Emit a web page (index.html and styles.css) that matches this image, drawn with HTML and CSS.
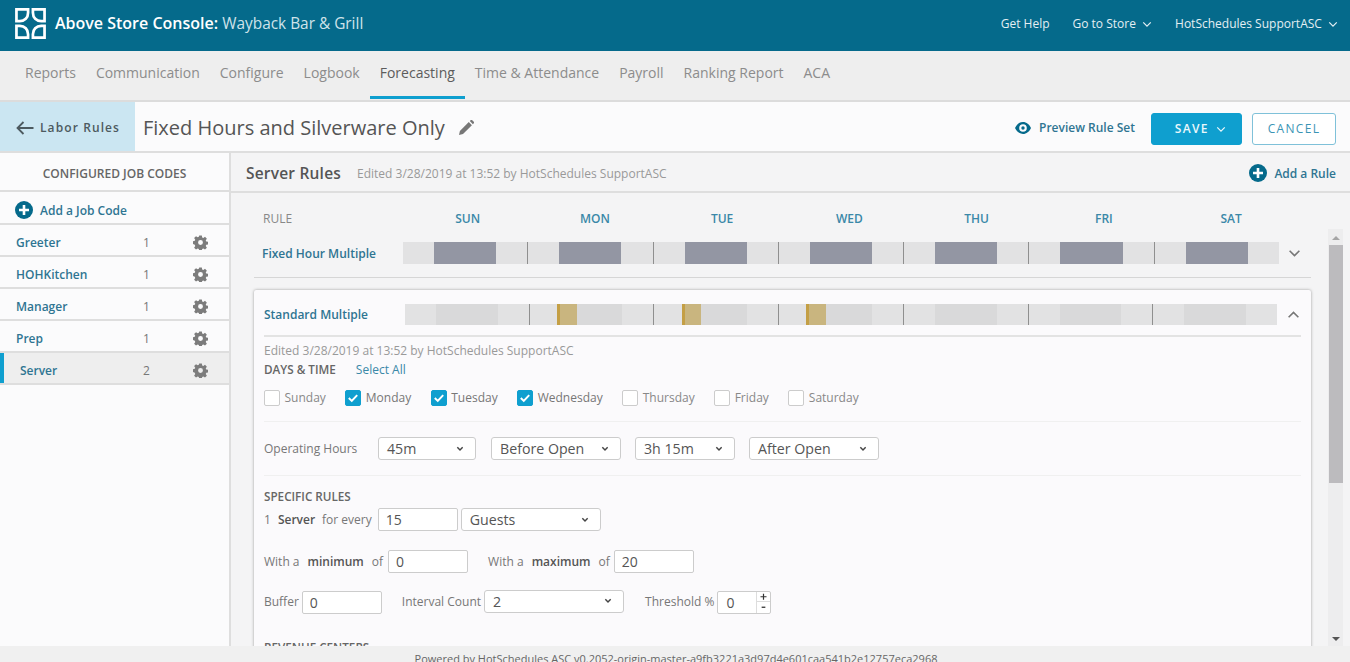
FILE: index.html
```html
<!DOCTYPE html>
<html lang="en">
<head>
    <meta charset="UTF-8">
    <meta name="viewport" content="width=device-width, initial-scale=1.0">
    <title>Above Store Console</title>
    <link rel="stylesheet" href="styles.css">
</head>
<body>

    <svg class="icon-defs" width="0" height="0">
        <defs>
            <symbol id="chev" viewBox="0 0 12 8"><path d="M1.5 1.5 6 6l4.5-4.5" fill="none" stroke="currentColor" stroke-width="1.5"/></symbol>
            <symbol id="chev-bold" viewBox="0 0 12 8"><path d="M2 1.5 6 5.5l4-4" fill="none" stroke="currentColor" stroke-width="2.2"/></symbol>
            <symbol id="plus" viewBox="0 0 18 18"><circle cx="9" cy="9" r="9" fill="currentColor"/><path d="M9 4v10M4 9h10" stroke="#fff" stroke-width="2.6"/></symbol>
            <symbol id="gear" viewBox="0 0 16 16"><path fill="currentColor" fill-rule="evenodd" d="M6.6.5h2.8l.4 2.1 1.2.5 1.8-1.2 2 2-1.2 1.8.5 1.2 2.1.4v2.8l-2.1.4-.5 1.2 1.2 1.8-2 2-1.8-1.2-1.2.5-.4 2.1H6.6l-.4-2.1-1.2-.5-1.8 1.2-2-2 1.2-1.8-.5-1.2L-.2 9.4V6.6l2.1-.4.5-1.2-1.2-1.8 2-2L5 2.4l1.2-.5zM8 5.4a2.6 2.6 0 1 0 0 5.2 2.6 2.6 0 0 0 0-5.2z"/></symbol>
            <symbol id="tick" viewBox="0 0 16 16"><path d="M3.2 8 6.6 11.4 12.8 4.6" fill="none" stroke="#fff" stroke-width="2.2"/></symbol>
            <path id="petal" d="M1.5 1.5H13.5V5C13.5 10 10 13.5 5 13.5H1.5Z"/>
        </defs>
    </svg>

    <!-- Top bar -->
    <header class="topbar">
        <svg class="logo" viewBox="0 0 32 32" width="31" height="31">
            <g fill="none" stroke="#fff" stroke-width="2.8">
                <use href="#petal"/>
                <use href="#petal" transform="matrix(-1 0 0 1 32 0)"/>
                <use href="#petal" transform="matrix(1 0 0 -1 0 32)"/>
                <use href="#petal" transform="matrix(-1 0 0 -1 32 32)"/>
            </g>
        </svg>
        <div class="brand"><b>Above Store Console:</b> <span>Wayback Bar &amp; Grill</span></div>
        <div class="top-links">
            <a href="#">Get Help</a>
            <a href="#">Go to Store <svg class="chev-sm"><use href="#chev"/></svg></a>
            <a href="#">HotSchedules SupportASC <svg class="chev-sm"><use href="#chev"/></svg></a>
        </div>
    </header>

    <!-- Main navigation -->
    <nav class="mainnav">
        <a href="#">Reports</a>
        <a href="#">Communication</a>
        <a href="#">Configure</a>
        <a href="#">Logbook</a>
        <a href="#" class="active">Forecasting</a>
        <a href="#">Time &amp; Attendance</a>
        <a href="#">Payroll</a>
        <a href="#">Ranking Report</a>
        <a href="#">ACA</a>
    </nav>

    <!-- Rule set title -->
    <div class="toolbar">
        <a href="#" class="back">
            <svg width="18" height="14" viewBox="0 0 18 14"><path d="M7.5 1 1.5 7l6 6M1.5 7H17.5" fill="none" stroke="currentColor" stroke-width="1.8"/></svg>
            Labor Rules
        </a>
        <h1 class="set-title">Fixed Hours and Silverware Only</h1>
        <svg class="pencil" width="15" height="15" viewBox="0 0 15 15"><path fill="currentColor" d="M0 15l.9-4L9.8 2.1l3.1 3.1L4 14.1zM10.8 1.1 11.9 0a.8.8 0 0 1 1.1 0l2 2a.8.8 0 0 1 0 1.1l-1.1 1.1z"/></svg>
        <a href="#" class="preview">
            <svg width="16" height="12" viewBox="0 0 16 12"><path fill="currentColor" fill-rule="evenodd" d="M8 0c3.5 0 6.4 2.4 8 6-1.6 3.6-4.5 6-8 6S1.6 9.6 0 6c1.6-3.6 4.5-6 8-6zm0 2.2a3.8 3.8 0 1 0 0 7.6 3.8 3.8 0 0 0 0-7.6zM8 4.3a1.7 1.7 0 1 1 0 3.4 1.7 1.7 0 0 1 0-3.4z"/></svg>
            Preview Rule Set
        </a>
        <button class="btn-save">SAVE <svg class="chev-sm"><use href="#chev"/></svg></button>
        <button class="btn-cancel">CANCEL</button>
    </div>

    <div class="workspace">

        <!-- Job codes -->
        <aside class="sidebar">
            <div class="side-title">CONFIGURED JOB CODES</div>
            <a href="#" class="add-job"><svg class="plus"><use href="#plus"/></svg> Add a Job Code</a>
            <div class="job"><span class="job-name">Greeter</span><span class="job-count">1</span><svg class="gear"><use href="#gear"/></svg></div>
            <div class="job"><span class="job-name">HOHKitchen</span><span class="job-count">1</span><svg class="gear"><use href="#gear"/></svg></div>
            <div class="job"><span class="job-name">Manager</span><span class="job-count">1</span><svg class="gear"><use href="#gear"/></svg></div>
            <div class="job"><span class="job-name">Prep</span><span class="job-count">1</span><svg class="gear"><use href="#gear"/></svg></div>
            <div class="job selected"><span class="job-name">Server</span><span class="job-count">2</span><svg class="gear"><use href="#gear"/></svg></div>
        </aside>

        <main class="content">
            <div class="content-head">
                <h2>Server Rules</h2>
                <span class="edited">Edited 3/28/2019 at 13:52 by HotSchedules SupportASC</span>
                <a href="#" class="add-rule"><svg class="plus"><use href="#plus"/></svg> Add a Rule</a>
            </div>

            <div class="day-head">
                <span class="rule-label">RULE</span>
                <div class="day-labels">
                    <span>SUN</span><span>MON</span><span>TUE</span><span>WED</span><span>THU</span><span>FRI</span><span>SAT</span>
                </div>
            </div>

            <div class="scroll-wrap">
                <div class="scroller">

                    <div class="rule-row">
                        <a href="#" class="rule-name">Fixed Hour Multiple</a>
                        <div class="bar" id="barFixed"></div>
                        <svg class="chev-lg"><use href="#chev"/></svg>
                    </div>

                    <section class="card">
                        <div class="card-top">
                            <a href="#" class="rule-name">Standard Multiple</a>
                            <div class="bar bar-open" id="barStandard"></div>
                            <svg class="chev-lg flip"><use href="#chev"/></svg>
                        </div>

                        <div class="note">Edited 3/28/2019 at 13:52 by HotSchedules SupportASC</div>
                        <div class="days-title"><b>DAYS &amp; TIME</b><a href="#">Select All</a></div>

                        <div class="checks">
                            <label class="check"><span class="box"></span>Sunday</label>
                            <label class="check on"><span class="box"><svg><use href="#tick"/></svg></span>Monday</label>
                            <label class="check on"><span class="box"><svg><use href="#tick"/></svg></span>Tuesday</label>
                            <label class="check on"><span class="box"><svg><use href="#tick"/></svg></span>Wednesday</label>
                            <label class="check"><span class="box"></span>Thursday</label>
                            <label class="check"><span class="box"></span>Friday</label>
                            <label class="check"><span class="box"></span>Saturday</label>
                        </div>

                        <div class="hours">
                            <span class="hours-label">Operating Hours</span>
                            <div class="select w98">45m<svg class="chev-xs"><use href="#chev-bold"/></svg></div>
                            <div class="select w130">Before Open<svg class="chev-xs"><use href="#chev-bold"/></svg></div>
                            <div class="select w100">3h 15m<svg class="chev-xs"><use href="#chev-bold"/></svg></div>
                            <div class="select w130">After Open<svg class="chev-xs"><use href="#chev-bold"/></svg></div>
                        </div>

                        <div class="specific">
                            <div class="specific-title">SPECIFIC RULES</div>
                            <div class="form-row first">
                                <span>1</span><b class="who">Server</b><span class="for-every">for every</span>
                                <input class="field w80" type="text" value="15">
                                <div class="select w140 tight">Guests<svg class="chev-xs"><use href="#chev-bold"/></svg></div>
                            </div>
                            <div class="form-row second">
                                <span>With a</span><b>minimum</b><span>of</span>
                                <input class="field w80" type="text" value="0">
                                <span class="gap-left">With a</span><b>maximum</b><span>of</span>
                                <input class="field w80 max" type="text" value="20">
                            </div>
                            <div class="form-row third">
                                <span>Buffer</span>
                                <input class="field w80 near" type="text" value="0">
                                <span class="interval">Interval Count</span>
                                <div class="select w140 tight">2<svg class="chev-xs"><use href="#chev-bold"/></svg></div>
                                <span class="threshold">Threshold %</span>
                                <div class="spinner">
                                    <span class="spin-value">0</span>
                                    <span class="spin-btns">
                                        <svg viewBox="0 0 14 11"><path d="M7 2v7M3.500 5.500h7" stroke="#333" stroke-width="1.4"/></svg>
                                        <svg viewBox="0 0 14 11"><path d="M5 5.500h4" stroke="#333" stroke-width="1.4"/></svg>
                                    </span>
                                </div>
                            </div>
                            <div class="specific-title revenue">REVENUE CENTERS</div>
                        </div>
                    </section>
                </div>

                <div class="scrollbar">
                    <span class="arrow-up"></span>
                    <div class="thumb"></div>
                    <span class="arrow-down"></span>
                </div>
            </div>
        </main>
    </div>

    <footer class="footer">Powered by HotSchedules ASC v0.2052-origin-master-a9fb3221a3d97d4e601caa541b2e12757eca2968</footer>

    <script>
        // day strips: each day is a run of [width %, kind] pieces
        var fixedDay = [[25, 'light'], [50, 'dark'], [25, 'light']];

        function drawBar(id, days) {
            var bar = document.getElementById(id);
            days.forEach(function (pieces) {
                var day = document.createElement('div');
                day.className = 'bar-day';
                pieces.forEach(function (p) {
                    var seg = document.createElement('div');
                    seg.className = 'seg seg-' + p[1];
                    seg.style.width = p[0] + '%';
                    day.appendChild(seg);
                });
                bar.appendChild(day);
            });
        }

        var grey = [[25, 'light'], [50, 'mid'], [25, 'light']];
        var gold = [[22, 'light'], [16, 'gold'], [37, 'mid'], [25, 'light']];

        drawBar('barFixed', [fixedDay, fixedDay, fixedDay, fixedDay, fixedDay, fixedDay, fixedDay]);
        drawBar('barStandard', [grey, gold, gold, gold, grey, grey, grey]);
    </script>

</body>
</html>
```

FILE: styles.css
```css
* {
    margin: 0;
    padding: 0;
    box-sizing: border-box;
}

html, body {
    height: 100%;
}

body {
    font-family: "Open Sans", Arial, sans-serif;
    font-size: 12px;
    color: #666;
    background-color: #f4f4f5;
    display: flex;
    flex-direction: column;
    overflow: hidden;
}

a {
    text-decoration: none;
    color: inherit;
}

.icon-defs {
    position: absolute;
}

/* Top bar */
.topbar {
    flex: 0 0 51px;
    display: flex;
    align-items: center;
    padding: 0 12px 5px 15px;
    background-color: #056a8b;
    color: #fff;
}

.logo {
    margin-right: 9px;
}

.brand {
    font-size: 16px;
    color: #cfe3ea;
}

.brand b {
    font-weight: 600;
    color: #fff;
}

.brand span {
    font-size: 15.4px;
}

.top-links {
    margin-left: auto;
    display: flex;
    gap: 23px;
    font-size: 12px;
    color: #e4eff3;
}

.chev-sm {
    width: 10px;
    height: 7px;
    margin-left: 3px;
}

/* Main navigation */
.mainnav {
    flex: 0 0 51px;
    display: flex;
    padding-left: 15px;
    background-color: #eeeeee;
    border-bottom: 2px solid #dcdcdc;
}

.mainnav a {
    padding: 12px 10px 0;
    font-size: 14px;
    color: #8c8c8c;
}

.mainnav a.active {
    color: #5c5c5c;
    border-bottom: 3px solid #0f9fcf;
    height: 48px;
}

/* Toolbar */
.toolbar {
    flex: 0 0 51px;
    display: flex;
    align-items: center;
    padding-right: 14px;
    background-color: #fbfbfc;
    border-bottom: 2px solid #dedede;
}

.back {
    align-self: stretch;
    width: 135px;
    display: flex;
    align-items: center;
    gap: 6px;
    padding: 2px 0 0 16px;
    background-color: #cbe6f2;
    color: #4d5a60;
    font-size: 12px;
    font-weight: 600;
    letter-spacing: 1.1px;
}

.set-title {
    margin: 2px 0 0 8px;
    font-size: 20px;
    font-weight: 400;
    color: #555;
}

.pencil {
    margin: 2px 0 0 14px;
    color: #777;
}

.preview {
    margin: 2px 0 0 auto;
    display: flex;
    align-items: center;
    gap: 8px;
    font-size: 12px;
    font-weight: 600;
    color: #2f7592;
}

.preview svg {
    color: #056a8b;
}

.btn-save, .btn-cancel {
    height: 32px;
    margin-top: 4px;
    font-family: inherit;
    font-size: 12px;
    font-weight: 600;
    letter-spacing: 1.3px;
    border-radius: 3px;
}

.btn-save {
    width: 91px;
    margin-left: 16px;
    padding-left: 8px;
    background-color: #0f9fcf;
    color: #eaf7fb;
    border: 1px solid #0f9fcf;
}

.btn-cancel {
    width: 84px;
    margin-left: 10px;
    background-color: #fff;
    color: #3a94b5;
    border: 1px solid #7fc1d9;
    font-weight: 400;
}

/* Layout below the toolbar */
.workspace {
    flex: 1;
    min-height: 0;
    display: flex;
}

.sidebar {
    flex: 0 0 231px;
    background-color: #fbfbfc;
    border-right: 2px solid #dedede;
}

.side-title {
    height: 39px;
    line-height: 41px;
    text-align: center;
    font-size: 12px;
    font-weight: 600;
    color: #666;
    border-bottom: 2px solid #dedede;
}

.add-job {
    height: 33px;
    display: flex;
    align-items: center;
    gap: 7px;
    padding: 5px 0 0 15px;
    font-size: 12px;
    font-weight: 600;
    color: #2f7592;
    border-bottom: 2px solid #dedede;
}

.plus {
    width: 18px;
    height: 18px;
    color: #056a8b;
    flex: none;
}

.job {
    height: 32px;
    display: flex;
    align-items: center;
    padding: 4px 0 0 16px;
    font-size: 12px;
    border-bottom: 2px solid #dedede;
}

.job-name {
    width: 127px;
    font-weight: 600;
    color: #2f7592;
}

.job-count {
    width: 50px;
    color: #777;
}

.gear {
    width: 15px;
    height: 15px;
    margin-top: 1px;
    color: #7c7c7c;
}

.job.selected {
    padding-left: 20px;
    background-color: #eeeeee;
    box-shadow: inset 4px 0 0 #0f9fcf;
}

.job.selected .job-name {
    width: 123px;
}

/* Right side */
.content {
    flex: 1;
    min-width: 0;
    display: flex;
    flex-direction: column;
}

.content-head {
    flex: 0 0 40px;
    display: flex;
    align-items: center;
    padding: 2px 14px 0 15px;
    border-bottom: 2px solid #dedede;
}

.content-head h2 {
    font-size: 15.5px;
    font-weight: 600;
    letter-spacing: 0.2px;
    color: #555;
}

.edited {
    margin-left: 16px;
    font-size: 12px;
    color: #999;
}

.add-rule {
    margin-left: auto;
    display: flex;
    align-items: center;
    gap: 7px;
    font-size: 12px;
    font-weight: 600;
    color: #2f7592;
}

.day-head {
    flex: 0 0 36px;
    display: flex;
    align-items: center;
    padding: 14px 0 0 32px;
}

.rule-label {
    width: 141px;
    font-size: 12px;
    color: #888;
}

.day-labels {
    display: flex;
    margin-top: 1px;
}

.day-labels span {
    width: 127.25px;
    text-align: center;
    font-size: 12px;
    font-weight: 600;
    color: #3a88a8;
}

.scroll-wrap {
    flex: 1;
    min-height: 0;
    display: flex;
    padding-right: 7px;
}

.scroller {
    flex: 1;
    min-width: 0;
    overflow: hidden;
    padding: 0 17px 0 23px;
}

.rule-row {
    height: 49px;
    display: flex;
    align-items: center;
    padding: 0 8px;
    border-bottom: 1px solid #d6d6d6;
    margin-bottom: 12px;
}

.rule-name {
    flex: 0 0 141px;
    font-size: 12px;
    font-weight: 600;
    color: #2f7592;
}

.bar {
    flex: 0 0 876px;
    height: 22px;
    display: flex;
}

.bar-open {
    flex-basis: 872px;
    height: 21px;
}

.bar-day {
    flex: 1;
    display: flex;
    border-right: 1px solid #8f8f8f;
}

.bar-day:last-child {
    border-right: 0;
}

.seg {
    height: 100%;
}

.seg-light {
    background-color: #e2e2e3;
}

.seg-dark {
    background-color: #9396a3;
}

.seg-mid {
    background-color: #d9d9da;
}

.seg-gold {
    background-color: #c9b57f;
    border-left: 3px solid #c49f45;
}

.chev-lg {
    width: 13px;
    height: 9px;
    margin-left: 9px;
    color: #777;
}

.chev-lg.flip {
    transform: scaleY(-1);
}

/* Expanded card */
.card {
    background-color: #fbfafc;
    border-radius: 2px;
    box-shadow: 0 0 3px #999;
    padding: 0 10px;
    height: 400px;
    overflow: hidden;
}

.card-top {
    height: 47px;
    display: flex;
    align-items: center;
    padding-top: 4px;
    border-bottom: 2px solid #e3e3e3;
}

.card-top .rule-name {
    flex-basis: 141px;
}

.card-top .chev-lg {
    margin-left: 10px;
}

.note {
    margin-top: 6px;
    line-height: 16px;
    font-size: 12px;
    color: #999;
}

.days-title {
    margin-top: 2px;
    line-height: 17px;
    font-size: 12px;
    color: #666;
}

.days-title b {
    font-size: 11.7px;
    font-weight: 600;
    margin-right: 20px;
}

.days-title a {
    color: #3a88a8;
}

.checks {
    display: flex;
    align-items: center;
    gap: 19.5px;
    margin-top: 11px;
    padding-bottom: 15px;
    border-bottom: 1px solid #f0f0f0;
}

.check {
    display: flex;
    align-items: center;
    gap: 4.5px;
    font-size: 12px;
    color: #888;
}

.check.on {
    color: #777;
}

.box {
    width: 16px;
    height: 16px;
    background-color: #fff;
    border: 1px solid #ccc;
    border-radius: 2px;
}

.check.on .box {
    background-color: #0f9fcf;
    border-color: #0f9fcf;
}

.box svg {
    display: block;
    width: 14px;
    height: 14px;
}

.hours {
    display: flex;
    align-items: center;
    height: 54px;
    border-bottom: 1px solid #f0f0f0;
}

.hours-label {
    width: 114px;
    font-size: 12px;
    color: #777;
}

.select {
    height: 23px;
    display: flex;
    align-items: center;
    justify-content: space-between;
    padding: 0 11px 0 8px;
    margin-right: 14px;
    background-color: #fff;
    border: 1px solid #ccc;
    border-radius: 3px;
    font-size: 14.2px;
    color: #555;
}

.chev-xs {
    width: 8px;
    height: 6px;
    color: #444;
}

.select.w98 {
    width: 98px;
    margin-right: 15px;
}

.w100 { width: 100px; }
.w130 { width: 130px; }
.w140 { width: 140px; }
.w80 { width: 80px; }

.select.tight {
    margin-right: 0;
}

.specific-title {
    padding-top: 12px;
    line-height: 16px;
    font-size: 11.7px;
    font-weight: 600;
    color: #666;
}

.form-row {
    display: flex;
    align-items: center;
    gap: 5px;
    font-size: 12px;
    color: #777;
}

.form-row b {
    color: #555;
    font-weight: 600;
    margin: 0 3px;
}

.form-row.first {
    margin-top: 3px;
    height: 25px;
    gap: 3px;
}

.form-row.first .who {
    margin: 0 4px;
}

.for-every {
    margin-right: 3px;
}

.form-row.second {
    margin-top: 17px;
    height: 24px;
}

.form-row.third {
    margin-top: 16px;
    height: 24px;
}

.gap-left {
    margin-left: 15px;
}

.field {
    height: 23px;
    padding: 0 7px;
    font-family: inherit;
    font-size: 14px;
    color: #555;
    background-color: #fff;
    border: 1px solid #ccc;
    border-radius: 2px;
}

.field.near {
    margin: 2px 0 0 -2px;
}

.field.max {
    margin-left: -1px;
}

.interval {
    margin-left: 15px;
    margin-right: -2px;
}

.threshold {
    margin-left: 16px;
    margin-right: -2px;
}

.spinner {
    width: 54px;
    height: 23px;
    display: flex;
    justify-content: space-between;
    margin-top: 2px;
    padding-left: 8px;
    background-color: #fff;
    border: 1px solid #ccc;
    border-radius: 2px;
    font-size: 14px;
    color: #555;
    line-height: 22px;
}

.spin-btns {
    width: 14px;
    display: flex;
    flex-direction: column;
    border-left: 1px solid #ddd;
}

.spin-btns svg {
    display: block;
    width: 13px;
    height: 10.5px;
}

.spin-btns svg:first-child {
    border-bottom: 1px solid #ddd;
}

.specific-title.revenue {
    padding-top: 26px;
}

/* Fake scrollbar */
.scrollbar {
    flex: 0 0 15px;
    display: flex;
    flex-direction: column;
    align-items: center;
    background-color: #ededee;
}

.thumb {
    width: 14px;
    height: 238px;
    margin-top: 5px;
    background-color: #bcbbbe;
}

.arrow-up, .arrow-down {
    width: 0;
    height: 0;
    border-left: 4px solid transparent;
    border-right: 4px solid transparent;
}

.arrow-up {
    margin-top: 7px;
    border-bottom: 4px solid #a5a5a5;
}

.arrow-down {
    margin-top: auto;
    margin-bottom: 5px;
    border-top: 4px solid #555;
}

/* Footer, cut off by the window edge */
.footer {
    flex: 0 0 16px;
    overflow: hidden;
    background-color: #f0f0f0;
    text-align: center;
    font-size: 11px;
    line-height: 25px;
    padding-left: 2px;
    color: #666;
    white-space: nowrap;
}
```
